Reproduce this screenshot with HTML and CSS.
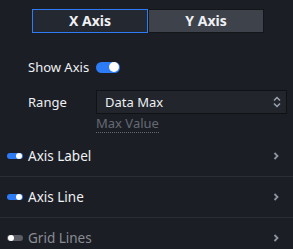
FILE: index.html
```html
<!DOCTYPE html>
<html lang="en">
<head>
  <meta charset="UTF-8">
  <title>Axis Settings</title>
  <link rel="stylesheet" href="styles.css">
</head>
<body>
  <div class="painel">
    <div class="abas">
      <div class="aba ativa">X Axis</div>
      <div class="aba">Y Axis</div>
    </div>

    <div class="campo">
      <span class="rotulo">Show Axis</span>
      <span class="chave chave-grande ligada"><i></i></span>
    </div>

    <div class="campo campo-select">
      <span class="rotulo">Range</span>
      <div class="select-box">
        <span>Data Max</span>
        <svg width="8" height="12" viewBox="0 0 8 12">
          <path d="M1 4.5 L4 1.5 L7 4.5" fill="none" stroke="#9aa3b0" stroke-width="1.5"/>
          <path d="M1 7.5 L4 10.5 L7 7.5" fill="none" stroke="#9aa3b0" stroke-width="1.5"/>
        </svg>
      </div>
    </div>
    <div class="dica">Max Value</div>

    <div class="lista">
      <div class="secao">
        <span class="chave chave-pequena ligada"><i></i></span>
        <span class="titulo-secao">Axis Label</span>
        <svg class="seta" width="6" height="8" viewBox="0 0 6 8"><path d="M1.5 1 L4.5 4 L1.5 7" fill="none" stroke="#8d95a1" stroke-width="1.8"/></svg>
      </div>
      <div class="secao">
        <span class="chave chave-pequena ligada"><i></i></span>
        <span class="titulo-secao">Axis Line</span>
        <svg class="seta" width="6" height="8" viewBox="0 0 6 8"><path d="M1.5 1 L4.5 4 L1.5 7" fill="none" stroke="#8d95a1" stroke-width="1.8"/></svg>
      </div>
      <div class="secao ultima">
        <span class="chave chave-pequena"><i></i></span>
        <span class="titulo-secao apagado">Grid Lines</span>
        <svg class="seta" width="6" height="8" viewBox="0 0 6 8"><path d="M1.5 1 L4.5 4 L1.5 7" fill="none" stroke="#8d95a1" stroke-width="1.8"/></svg>
      </div>
    </div>
  </div>
</body>
</html>
```

FILE: styles.css
```css
body {
  margin: 0;
  background-color: #1c1e25;
  font-family: "Noto Sans", Arial, sans-serif;
  font-size: 13px;
  color: #eef0f3;
}

.painel {
  width: 293px;
  height: 249px;
  overflow: hidden;
}

.abas {
  display: flex;
  padding: 9px 0 0 32px;
}

.aba {
  width: 114px;
  height: 22px;
  line-height: 22px;
  text-align: center;
  font-weight: bold;
  font-size: 14px;
  background: #3d424b;
  border: 1px solid #14161a;
}

.aba.ativa {
  background: #242830;
  border-color: #2d7cf6;
}

.campo {
  display: flex;
  align-items: center;
  padding-left: 28px;
  margin-top: 25px;
  height: 18px;
}

.rotulo {
  width: 68px;
  flex-shrink: 0;
}

.campo-select {
  margin-top: 14px;
  height: 24px;
}

.select-box {
  box-sizing: border-box;
  width: 191px;
  height: 24px;
  display: flex;
  align-items: center;
  justify-content: space-between;
  padding: 0 5px 0 8px;
  background: #22252c;
  border: 1px solid #101216;
}

.dica {
  margin-left: 96px;
  display: inline-block;
  color: #646a73;
  line-height: 17px;
  border-bottom: 1px dotted #646a73;
}

.chave {
  position: relative;
  display: inline-block;
  border-radius: 8px;
  background: #5b5e64;
}

.chave.ligada {
  background: #2d7cf6;
}

.chave i {
  position: absolute;
  top: 50%;
  background: #fff;
  border-radius: 50%;
  transform: translateY(-50%);
}

.chave-grande {
  width: 24px;
  height: 11px;
}

.chave-grande i {
  width: 10px;
  height: 10px;
  right: 1px;
}

.chave-pequena {
  width: 16px;
  height: 6px;
  margin-right: 5px;
}

.chave-pequena i {
  width: 6px;
  height: 6px;
  left: 1px;
}

.chave-pequena.ligada i {
  left: auto;
  right: 1px;
}

.lista {
  margin-top: 3px;
}

.secao {
  display: flex;
  align-items: center;
  height: 40px;
  padding-left: 7px;
  border-bottom: 1px solid #2b2e35;
}

.secao.ultima {
  border-bottom: none;
}

.titulo-secao {
  flex: 1;
  font-size: 13.5px;
}

.apagado {
  color: #8a8d93;
}

.seta {
  margin-right: 14px;
}
```
